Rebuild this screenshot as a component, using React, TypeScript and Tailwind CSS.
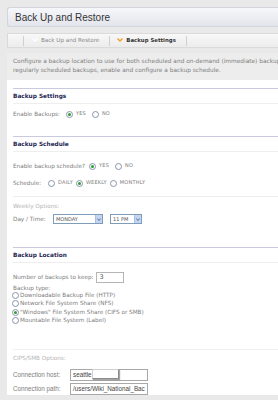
import React from 'react';

const font = { fontFamily: '"DejaVu Sans", Verdana, sans-serif' };

const Radio = ({ checked = false }: { checked?: boolean }) => (
  <span className="inline-flex items-center justify-center w-[7px] h-[7px] rounded-full border border-[#8795ab] bg-white shrink-0">
    {checked && <span className="w-[3px] h-[3px] rounded-full bg-[#2f9a2f]" />}
  </span>
);

const Chevron = ({ color }: { color: string }) => (
  <svg width="6" height="4" viewBox="0 0 6 4" className="shrink-0">
    <path d="M0.5 0.5 L3 3 L5.5 0.5" fill="none" stroke={color} strokeWidth="1.4" />
  </svg>
);

const Select = ({ value, width }: { value: string; width: string }) => (
  <span className={`inline-flex items-center h-[10px] border border-[#7f9db9] bg-white ${width}`}>
    <span className="flex-1 pl-[2px] text-[5px] text-[#555] leading-none">{value}</span>
    <span className="flex items-center justify-center w-[7px] h-full bg-[#c3d6f1] border-l border-[#a9c0e4]">
      <svg width="4" height="3" viewBox="0 0 4 3">
        <path d="M0.3 0.5 L2 2.5 L3.7 0.5" fill="none" stroke="#4d6185" strokeWidth="0.9" />
      </svg>
    </span>
  </span>
);

const SectionHead = ({ title }: { title: string }) => (
  <>
    <div className="h-px bg-[#cacadf]" />
    <div className="h-[14px] flex items-center text-[5.8px] font-bold text-[#262654]">{title}</div>
    <div className="h-px bg-[#eeeeee]" />
  </>
);

const Opt = ({ checked, label }: { checked?: boolean; label: string }) => (
  <span className="flex items-center gap-[3px]">
    <Radio checked={checked} />
    <span className="text-[5px] tracking-[0.2px]">{label}</span>
  </span>
);

export default function App() {
  return (
    <div className="w-[278px] h-[400px] overflow-hidden bg-[#e9e9e9] pt-[7px] text-[#7d7d7d]" style={font}>
      {/* title bar */}
      <div className="ml-[7px] h-[20px] flex items-center pl-[7px] rounded-l-[3px] border border-r-0 border-[#d3d5dd] bg-gradient-to-b from-[#f6f7fa] to-[#e3e5ec]">
        <span className="text-[10px] text-[#333]" style={{ fontFamily: '"Liberation Sans", Arial, sans-serif' }}>
          Back Up and Restore
        </span>
      </div>

      {/* tabs */}
      <div className="ml-[7px] mt-[6px] h-[15px] flex items-center border border-r-0 border-[#dadada] bg-gradient-to-b from-[#f8f8f8] to-[#ececec]">
        <span className="ml-[15px] w-px h-[10px] bg-[#cfcfcf]" />
        <span className="flex items-center gap-[3px] pl-[8px] pr-[10px] text-[5.6px] text-[#8a8a8a]">
          <Chevron color="#ffffff" />
          Back Up and Restore
        </span>
        <span className="w-px h-[10px] bg-[#cfcfcf]" />
        <span className="flex items-center gap-[3px] pl-[7px] pr-[10px] text-[5.4px] font-bold text-[#333]">
          <Chevron color="#f0a020" />
          Backup Settings
        </span>
        <span className="w-px h-[10px] bg-[#cfcfcf]" />
      </div>

      <div className="ml-[7px] mt-[5px] bg-white">
        {/* description */}
        <div className="h-[27px] bg-[#ededed] pl-[6px] pt-[4px] text-[5.85px] leading-[9px] text-[#808080] whitespace-nowrap overflow-hidden">
          <div>Configure a backup location to use for both scheduled and on-demand (immediate) backup</div>
          <div>regularly scheduled backups, enable and configure a backup schedule.</div>
        </div>

        <div className="pl-[6px] pt-[8px]">
          <SectionHead title="Backup Settings" />
          <div className="mt-[5px] h-[10px] flex items-center text-[5.7px]">
            <span>Enable Backups:</span>
            <span className="ml-[6px] flex items-center gap-[6px]">
              <Opt checked label="YES" />
              <Opt label="NO" />
            </span>
          </div>

          <div className="mt-[17px]">
            <SectionHead title="Backup Schedule" />
          </div>
          <div className="mt-[9px] h-[10px] flex items-center text-[5.7px]">
            <span>Enable backup schedule?</span>
            <span className="ml-[4px] flex items-center gap-[6px]">
              <Opt checked label="YES" />
              <Opt label="NO" />
            </span>
          </div>
          <div className="mt-[7px] h-[10px] flex items-center text-[5.7px]">
            <span>Schedule:</span>
            <span className="ml-[7px] flex items-center gap-[3px]">
              <Opt label="DAILY" />
              <Opt checked label="WEEKLY" />
              <Opt label="MONTHLY" />
            </span>
          </div>
          <div className="mt-[8px] h-px bg-[#eeeeee]" />
          <div className="mt-[4px] h-[10px] flex items-center text-[5.7px] text-[#b4b4b4]">Weekly Options:</div>
          <div className="mt-[3px] h-[10px] flex items-center text-[5.7px]">
            <span className="w-[40px]">Day / Time:</span>
            <Select value="MONDAY" width="w-[50px]" />
            <span className="ml-[7px]">
              <Select value="11 PM" width="w-[32px]" />
            </span>
          </div>

          <div className="mt-[23px]">
            <SectionHead title="Backup Location" />
          </div>
          <div className="mt-[9px] h-[11px] flex items-center text-[5.7px]">
            <span>Number of backups to keep:</span>
            <span className="ml-[3px] w-[28px] h-[11px] border border-[#b5b5b5] bg-white flex items-center pl-[2px] text-[6.5px] text-[#555]">
              3
            </span>
          </div>
          <div className="mt-[2px] h-[6px] flex items-center text-[5.7px]">Backup type:</div>
          <div className="flex flex-col text-[5.7px]">
            {[
              ['Downloadable Backup File (HTTP)', false],
              ['Network File System Share (NFS)', false],
              ['"Windows" File System Share (CIFS or SMB)', true],
              ['Mountable File System (Label)', false],
            ].map(([label, on]) => (
              <div key={label as string} className="h-[8.5px] flex items-center gap-[1px] -ml-[1px]">
                <Radio checked={on as boolean} />
                <span>{label as string}</span>
              </div>
            ))}
          </div>

          <div className="mt-[24px] h-px bg-[#f0f0f0]" />
          <div className="mt-[3px] h-[10px] flex items-center text-[5.7px] text-[#b4b4b4]">CIPS/SMB Options:</div>
          <div className="mt-[6px] h-[12px] flex items-center" style={{ fontFamily: '"Liberation Sans", Arial, sans-serif' }}>
            <span className="w-[57px] text-[6.3px]">Connection host:</span>
            <span className="relative w-[78px] h-[12px] border border-[#a8a8a8] bg-white flex items-center pl-[2px] text-[6.3px] text-[#444]">
              seattle
              <span className="absolute left-[21px] -top-[1px] w-[27px] h-[10px] bg-white border border-[#d0d0d0] border-b-[#8c8c8c] border-r-[#8c8c8c] shadow-[1px_1px_1px_rgba(0,0,0,0.35)]" />
            </span>
          </div>
          <div className="mt-[2px] h-[12px] flex items-center" style={{ fontFamily: '"Liberation Sans", Arial, sans-serif' }}>
            <span className="w-[57px] text-[6.3px]">Connection path:</span>
            <span className="w-[78px] h-[12px] border border-[#a8a8a8] bg-white flex items-center pl-[2px] text-[6.3px] text-[#444] whitespace-nowrap">
              /users/Wiki_National_Bac
            </span>
          </div>
        </div>
      </div>
    </div>
  );
}
